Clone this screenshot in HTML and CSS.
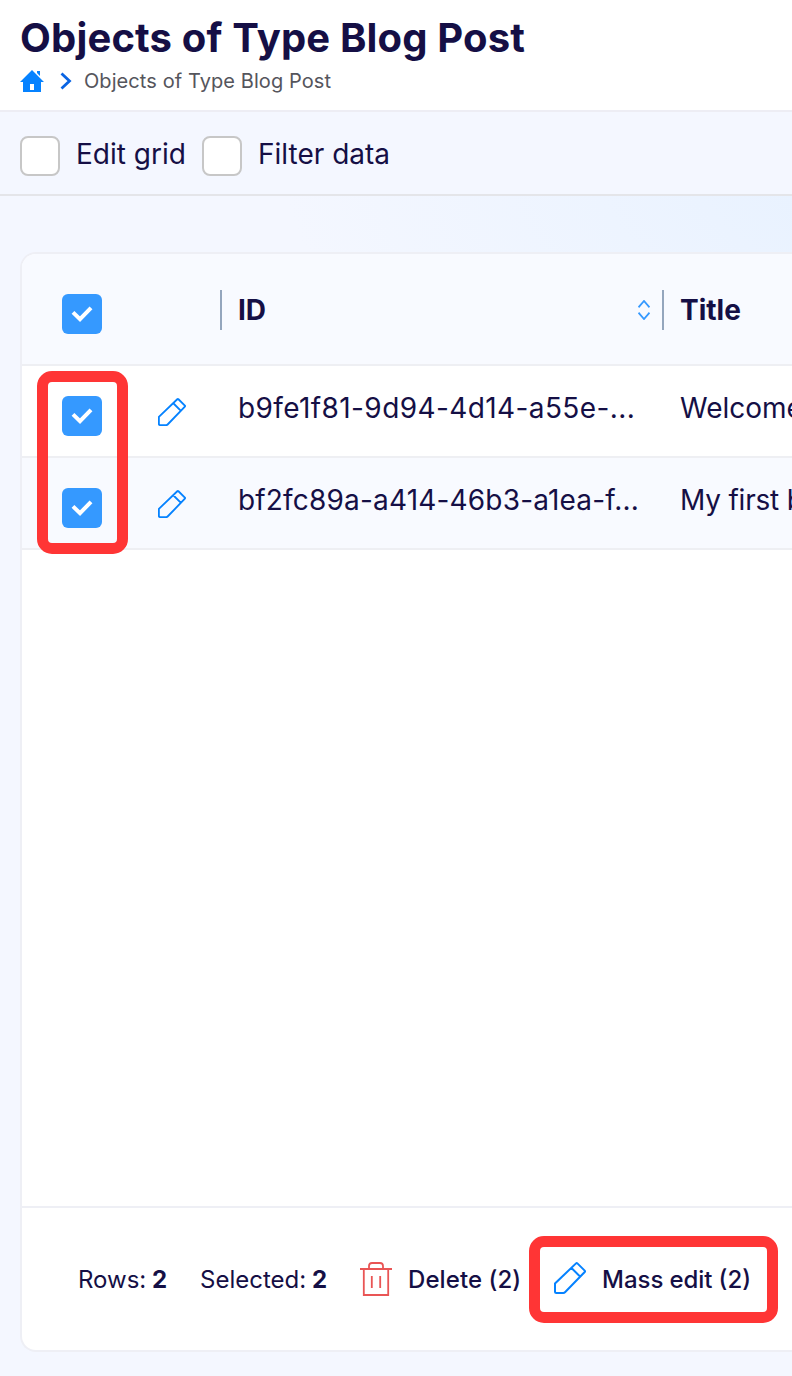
FILE: index.html
```html
<!DOCTYPE html>
<html lang="en">
<head>
<meta charset="utf-8">
<title>Objects of Type Blog Post</title>
<link rel="stylesheet" href="styles.css">
</head>
<body>
<svg class="defs" aria-hidden="true">
  <symbol id="pencil" viewBox="0 0 32 32"><path d="M1 28.5V21.5L22 1.4Q22.7.8 23.4 1.4L30.7 8.6Q31.3 9.3 30.7 10L11 30.3Q10.3 31 9.3 31H2.5Q1 31 1 29.5ZM17.5 6L26.5 15"/></symbol>
  <symbol id="check" viewBox="0 0 40 40"><path d="M11 18.4L18 25.2L29 13.8"/></symbol>
</svg>
<header class="page-header">
  <h1 class="page-title">Objects of Type Blog Post</h1>
  <nav class="breadcrumb">
    <svg class="home" viewBox="0 0 24 22"><path d="M0 12L12 0L24 12H21V22H3V12ZM10 14V20H14V14ZM17 1H20V6L17 3Z" fill-rule="evenodd"/></svg>
    <svg class="chevron" viewBox="0 0 12 18"><path d="M1.5 1.5L9.5 9L1.5 16.5"/></svg>
    <span class="crumb">Objects of Type Blog Post</span>
  </nav>
</header>
<div class="toolbar">
  <span class="box"></span><span class="option edit">Edit grid</span>
  <span class="box"></span><span class="option filter">Filter data</span>
</div>
<main class="content">
  <section class="panel">
    <div class="row head">
      <span class="checkbox"><svg><use href="#check"/></svg></span>
      <div class="cell id"><span>ID</span><svg class="sort" viewBox="0 0 12 20"><path d="M.5 7.3L6 1L11.5 7.3M.5 12.7L6 19L11.5 12.7"/></svg></div>
      <div class="cell name"><span class="title-label">Title</span></div>
    </div>
    <div class="row">
      <span class="checkbox"><svg><use href="#check"/></svg></span>
      <svg class="edit-icon"><use href="#pencil"/></svg>
      <div class="cell id"><span class="uuid-a">b9fe1f81-9d94-4d14-a55e-...</span></div>
      <div class="cell name"><span>Welcome</span></div>
    </div>
    <div class="row alt">
      <span class="checkbox"><svg><use href="#check"/></svg></span>
      <svg class="edit-icon"><use href="#pencil"/></svg>
      <div class="cell id"><span class="uuid-b">bf2fc89a-a414-46b3-a1ea-f...</span></div>
      <div class="cell name"><span class="first">My first b</span></div>
    </div>
    <div class="space"></div>
    <footer class="footer">
      <span class="rows">Rows: <b>2</b></span>
      <span class="selected">Selected: <b>2</b></span>
      <svg class="trash" viewBox="0 0 32 34"><path d="M0 7H32M3.8 7V33H28.2V7M9 6V4Q9 1 12 1H20Q23 1 23 4V6M11.8 14V26M20.2 14V26"/></svg>
      <span class="action delete">Delete (2)</span>
      <svg class="mass-icon"><use href="#pencil"/></svg>
      <span class="action mass">Mass edit (2)</span>
    </footer>
  </section>
</main>
<div class="highlight rows-mark"></div>
<div class="highlight mass-mark"></div>
</body>
</html>
```
FILE: styles.css
```css
* { box-sizing: border-box; }
body { margin: 0; width: 792px; height: 1376px; position: relative; overflow: hidden; display: flex; flex-direction: column; font-family: Inter, sans-serif; color: #150f45; background: #f4f7ff; white-space: nowrap; }
svg { flex: none; fill: none; }
.defs { position: absolute; width: 0; height: 0; }
.page-header { height: 112px; flex: none; background: #fff; border-bottom: 2px solid #ededf4; padding: 14px 20px 0; }
.page-title { margin: 0; font-size: 40px; line-height: 48px; font-weight: 700; letter-spacing: .17px; }
.breadcrumb { display: flex; align-items: center; height: 38px; color: #55555c; font-size: 20px; }
.home { width: 24px; height: 22px; fill: #0582ff; }
.chevron { width: 12px; height: 18px; margin: 0 12px 0 16px; stroke: #0964e3; stroke-width: 2.8; }
.crumb { letter-spacing: .08px; }
.toolbar { height: 84px; flex: none; display: flex; align-items: center; padding: 2px 20px 0; border-bottom: 2px solid #e4e5e9; font-size: 28px; }
.box { width: 40px; height: 40px; flex: none; background: #fff; border: 2px solid #c7c7c7; border-radius: 8px; margin-top: 4px; }
.option { margin-left: 16px; }
.edit { width: 126px; }
.content { flex: 1; padding: 56px 0 24px 20px; background: radial-gradient(ellipse 720px 360px at 1000px -40px, #e4f0ff, #f4f7ff00); }
.panel { height: 1100px; display: flex; flex-direction: column; overflow: hidden; background: #fff; border: 2px solid #eeeff5; border-right: 0; border-radius: 16px 0 0 16px; }
.row { height: 92px; flex: none; display: grid; grid-template-columns: 96px 102px 442px 1fr; align-items: center; border-bottom: 2px solid #eeeff3; font-size: 28px; }
.head { height: 112px; background: #f8faff; font-weight: 700; }
.alt { background: #f8faff; }
.checkbox { width: 40px; height: 40px; margin: 10px 0 0 40px; border-radius: 6px; background: #3599ff; }
.checkbox svg { display: block; width: 40px; height: 40px; stroke: #fff; stroke-width: 4; }
.edit-icon { width: 28px; height: 28px; margin: 2px 0 0 40px; stroke: #0582ff; stroke-width: 2.1; }
.cell { display: flex; align-items: center; padding-left: 18px; margin-top: -6px; min-width: 0; }
.id { grid-column: 3; }
.uuid-a { letter-spacing: .4px; }
.uuid-b { letter-spacing: .18px; }
.first { letter-spacing: -.2px; }
.head .cell { height: 40px; margin-top: 2px; padding-left: 16px; border-left: 2px solid #94a6bd; }
.head .checkbox { margin-top: 10px; }
.sort { width: 12px; height: 20px; margin: 0 12px 0 auto; stroke: #3599ff; stroke-width: 1.8; }
.space { flex: 1; }
.footer { height: 144px; flex: none; display: flex; align-items: center; padding-left: 56px; border-top: 2px solid #eeeff5; font-size: 24px; }
.footer b { font-weight: 700; }
.rows, .selected { word-spacing: -1px; }
.rows { width: 122px; }
.selected { width: 160px; }
.action { font-weight: 500; }
.trash { width: 32px; height: 34px; margin-right: 16px; stroke: #e95555; stroke-width: 1.8; }
.delete { width: 146px; letter-spacing: .08px; }
.mass { word-spacing: -.4px; }
.mass-icon { width: 32px; height: 32px; margin: -2px 16px 0 0; stroke: #0582ff; stroke-width: 2; }
.highlight { position: absolute; border: 11px solid #ff3535; border-radius: 15px; }
.rows-mark { left: 37px; top: 371px; width: 91px; height: 183px; }
.mass-mark { left: 529px; top: 1236px; width: 249px; height: 87px; }
```
